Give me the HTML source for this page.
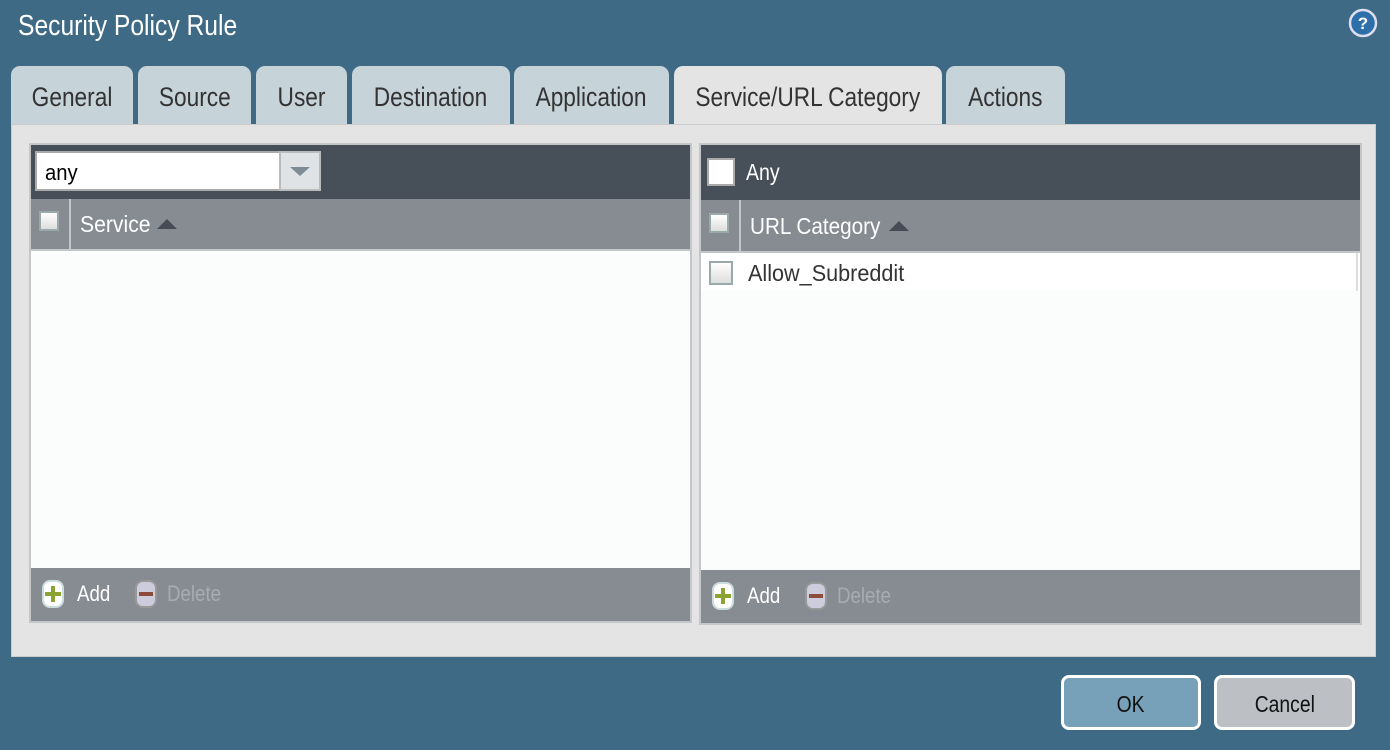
<!DOCTYPE html>
<html><head><style>
*{box-sizing:border-box;margin:0;padding:0}
body{width:1390px;height:750px;background:#3e6a86;font-family:"Liberation Sans",sans-serif;position:relative;overflow:hidden}
.a{position:absolute}
.n{display:inline-block;transform:scaleX(.85);transform-origin:0 50%;white-space:nowrap}
.nc{display:inline-block;transform:scaleX(.84);transform-origin:50% 50%;white-space:nowrap}
.title{left:18px;top:10px;color:#fff;font-size:29px}
.tab{position:absolute;top:66px;height:58px;background:#c6d3d8;border-radius:9px 9px 0 0;color:#333;font-size:27px;text-align:center;line-height:62px;white-space:nowrap}
.tab.act{background:#e4e4e4;height:60px}
.content{left:11px;top:124px;width:1365px;height:533px;background:#e4e4e4;border:1px solid #ccc}
.panel{position:absolute;border:2px solid #c4c7ca;background:#fbfdfc}
.hd{position:absolute;left:0;right:0;top:0;background:#474f59}
.ch{position:absolute;left:0;right:0;background:#878c93;color:#fff;font-size:23px}
.ft{position:absolute;left:0;right:0;bottom:0;background:#878c93;font-size:22px}
.cb{position:absolute;width:20px;height:20px;border:2px solid #9aa;background:linear-gradient(#fff,#ddd)}
.tri{display:inline-block;width:0;height:0;border-left:10px solid transparent;border-right:10px solid transparent;border-bottom:10px solid #454c55;margin-left:6px;vertical-align:3px}
.ic{position:absolute;width:22px;height:28px;border-radius:8px;border:2px solid #fff}
.btn{position:absolute;top:675px;height:55px;border:3px solid #fff;border-radius:8px;font-size:23px;text-align:center;line-height:52px;color:#111}
</style></head><body>
<div class="a title"><span class="n">Security Policy Rule</span></div>
<svg class="a" style="left:1348px;top:8px" width="30" height="30"><circle cx="15" cy="15" r="13" fill="#2d6fa8" stroke="#dde" stroke-width="2.5"/><text x="15" y="21" font-size="17" font-weight="bold" fill="#fff" text-anchor="middle" font-family="Liberation Sans">?</text></svg>
<div class="tab" style="left:11px;width:122px"><span class="nc">General</span></div>
<div class="tab" style="left:138px;width:113px"><span class="nc">Source</span></div>
<div class="tab" style="left:256px;width:91px"><span class="nc">User</span></div>
<div class="tab" style="left:352px;width:158px"><span class="nc">Destination</span></div>
<div class="tab" style="left:514px;width:155px"><span class="nc">Application</span></div>
<div class="tab act" style="left:674px;width:268px"><span class="nc">Service/URL Category</span></div>
<div class="tab" style="left:946px;width:119px"><span class="nc">Actions</span></div>
<div class="a content"></div>

<div class="panel" style="left:29px;top:143px;width:663px;height:480px">
 <div class="hd" style="height:54px">
  <div class="a" style="left:4px;top:6px;width:246px;height:40px;background:#fff;border:2px solid #aaa;font-size:22px;padding:7px 0 0 8px;color:#000"><span class="n" style="transform:scaleX(.92)">any</span></div>
  <div class="a" style="left:248px;top:6px;width:42px;height:40px;background:#e0e3e5;border:2px solid #bbb"><div class="a" style="left:9px;top:14px;border-left:10px solid transparent;border-right:10px solid transparent;border-top:9px solid #7d8c94"></div></div>
 </div>
 <div class="ch" style="top:54px;height:52px;border-bottom:2px solid #c4c7ca">
  <div class="cb" style="left:8px;top:12px"></div>
  <div class="a" style="left:38px;top:0;bottom:0;border-left:2px solid #c4c7ca"></div>
  <div class="a" style="left:49px;top:12px"><span class="n" style="transform:scaleX(.92)">Service</span></div>
  <div class="a" style="left:126px;top:20px;border-left:10px solid transparent;border-right:10px solid transparent;border-bottom:10px solid #454c55"></div>
 </div>
 <div class="ft" style="height:53px">
  <div class="ic" style="left:11px;top:12px;background:#fff;border-color:#cdd"><div class="a" style="left:7px;top:4px;width:4px;height:16px;background:#8aa331"></div><div class="a" style="left:1px;top:10px;width:16px;height:4px;background:#8aa331"></div></div>
  <div class="a" style="left:46px;top:13px;color:#fff"><span class="n">Add</span></div>
  <div class="ic" style="left:104px;top:12px;background:#ccd;border-color:#999"><div class="a" style="left:2px;top:10px;width:14px;height:4px;background:#8b4a3a"></div></div>
  <div class="a" style="left:136px;top:13px;color:#a8abaf"><span class="n">Delete</span></div>
 </div>
</div>

<div class="panel" style="left:699px;top:143px;width:663px;height:482px">
 <div class="hd" style="height:55px">
  <div class="a" style="left:6px;top:13px;width:28px;height:28px;background:#fff;border:2px solid #aaa"></div>
  <div class="a" style="left:45px;top:14px;color:#fff;font-size:23px"><span class="n">Any</span></div>
 </div>
 <div class="ch" style="top:55px;height:53px;border-bottom:2px solid #c4c7ca">
  <div class="cb" style="left:8px;top:13px"></div>
  <div class="a" style="left:38px;top:0;bottom:0;border-left:2px solid #c4c7ca"></div>
  <div class="a" style="left:49px;top:13px"><span class="n" style="transform:scaleX(.9)">URL Category</span></div>
  <div class="a" style="left:188px;top:21px;border-left:10px solid transparent;border-right:10px solid transparent;border-bottom:10px solid #454c55"></div>
 </div>
 <div class="a" style="left:0;right:0;top:108px;height:38px;background:#fff">
  <div class="cb" style="left:8px;top:8px;width:24px;height:24px"></div>
  <div class="a" style="left:47px;top:7px;font-size:23px;color:#333"><span class="n" style="transform:scaleX(.94)">Allow_Subreddit</span></div>
  <div class="a" style="right:2px;top:0;bottom:0;border-left:2px solid #ddd"></div>
 </div>
 <div class="ft" style="height:53px">
  <div class="ic" style="left:11px;top:12px;background:#fff;border-color:#cdd"><div class="a" style="left:7px;top:4px;width:4px;height:16px;background:#8aa331"></div><div class="a" style="left:1px;top:10px;width:16px;height:4px;background:#8aa331"></div></div>
  <div class="a" style="left:46px;top:13px;color:#fff"><span class="n">Add</span></div>
  <div class="ic" style="left:104px;top:12px;background:#ccd;border-color:#999"><div class="a" style="left:2px;top:10px;width:14px;height:4px;background:#8b4a3a"></div></div>
  <div class="a" style="left:136px;top:13px;color:#a8abaf"><span class="n">Delete</span></div>
 </div>
</div>

<div class="btn" style="left:1061px;width:140px;background:#76a1b8"><span class="nc">OK</span></div>
<div class="btn" style="left:1214px;width:141px;background:#bcc0c4"><span class="nc">Cancel</span></div>
</body></html>
